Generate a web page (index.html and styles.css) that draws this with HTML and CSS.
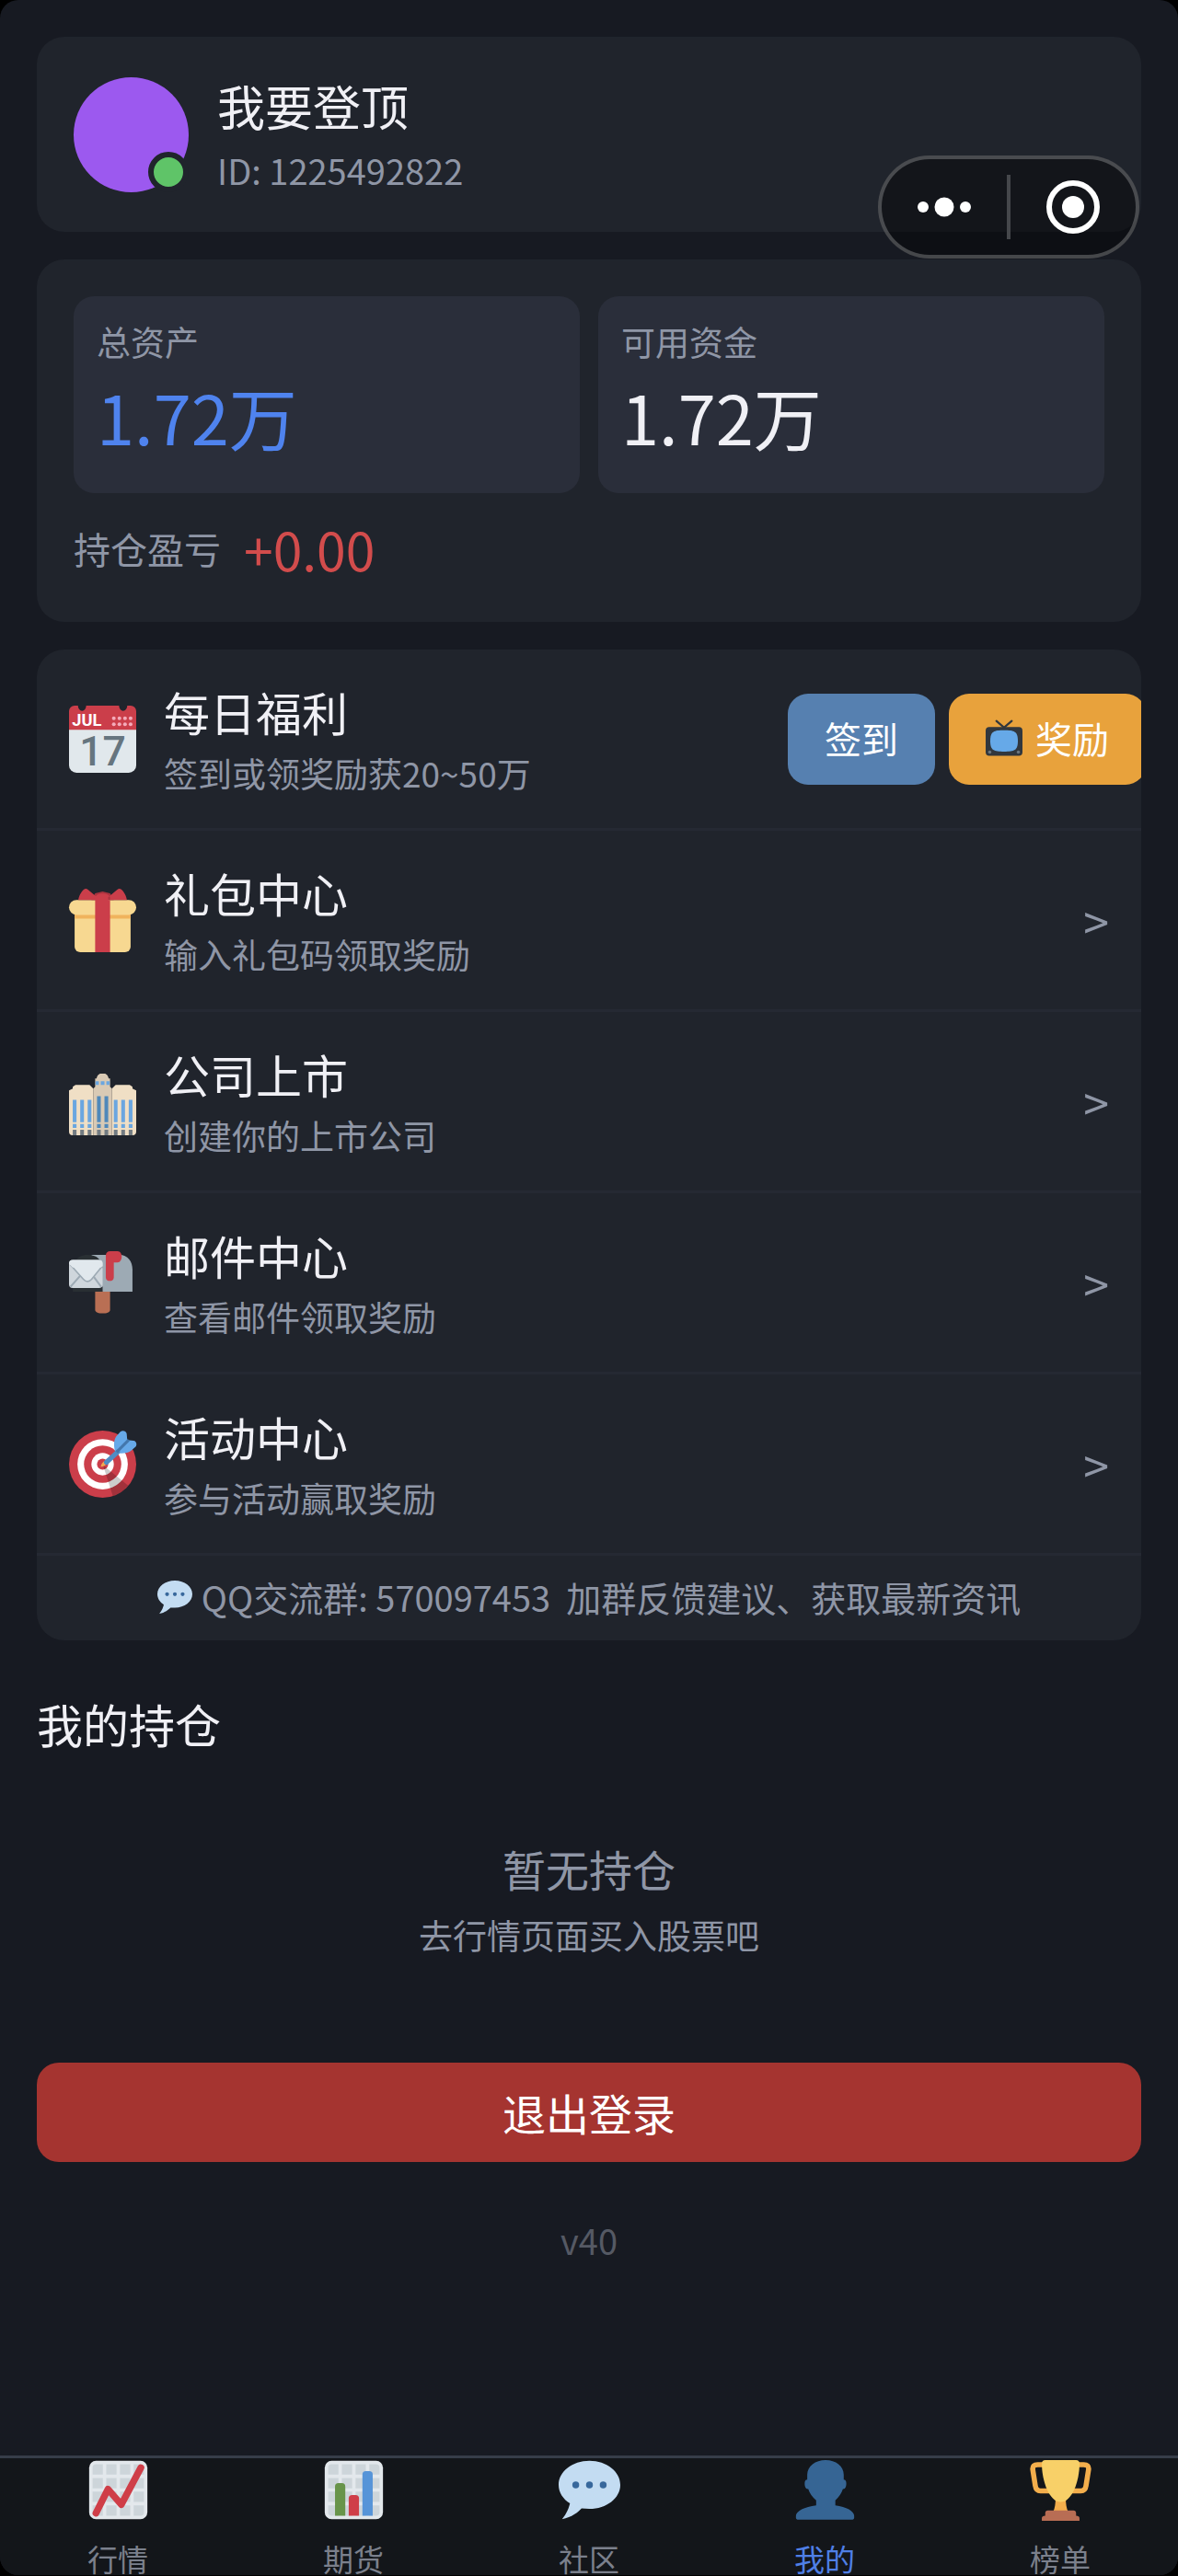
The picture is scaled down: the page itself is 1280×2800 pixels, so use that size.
FILE: index.html
```html
<!DOCTYPE html>
<html lang="zh-CN">
<head>
<meta charset="utf-8">
<meta name="viewport" content="width=device-width, initial-scale=1">
<title>我的</title>
<link rel="stylesheet" href="styles.css">
</head>
<body>
<div class="app">
  <div class="capsule">
    <button class="capsule-button" type="button" aria-label="更多">
      <svg width="60" height="60" viewBox="0 0 60 60" fill="#fff"><circle cx="7" cy="30" r="6"/><circle cx="30" cy="30" r="10.500"/><circle cx="53" cy="30" r="6"/></svg>
    </button>
    <span class="capsule-divider"></span>
    <button class="capsule-button" type="button" aria-label="关闭">
      <svg width="60" height="60" viewBox="0 0 60 60"><circle cx="30" cy="30" r="26" fill="none" stroke="#fff" stroke-width="6"/><circle cx="30" cy="30" r="12" fill="#fff"/></svg>
    </button>
  </div>

  <main class="content">
    <section class="card profile">
      <div class="avatar"><span class="status"></span></div>
      <div class="profile-text">
        <h1 class="name">我要登顶</h1>
        <p class="user-id">ID: 1225492822</p>
      </div>
    </section>

    <section class="card assets">
      <div class="tiles">
        <div class="tile">
          <p class="tile-label">总资产</p>
          <p class="tile-value total">1.72万</p>
        </div>
        <div class="tile">
          <p class="tile-label">可用资金</p>
          <p class="tile-value">1.72万</p>
        </div>
      </div>
      <div class="profit"><span class="profit-label">持仓盈亏</span><span class="profit-value">+0.00</span></div>
    </section>

    <section class="card menu">
      <div class="row">
        <svg class="row-icon" viewBox="0 0 36 36" aria-hidden="true">
          <path fill="#e1e8ec" d="M0 12h36v20a4 4 0 0 1-4 4H4a4 4 0 0 1-4-4z"/>
          <path fill="#cb3e4a" d="M0 13V3a3 3 0 0 1 3-3h1.800a2.200 2.800 0 0 0 4.400 0h17.600a2.200 2.800 0 0 0 4.400 0H33a3 3 0 0 1 3 3v10z"/>
          <text class="cal-month" x="9.500" y="11" text-anchor="middle">JUL</text>
          <g fill="#f4abba"><circle cx="24" cy="6.800" r="1"/><circle cx="27" cy="6.800" r="1"/><circle cx="30" cy="6.800" r="1"/><circle cx="33" cy="6.800" r="1"/><circle cx="24" cy="10" r="1"/><circle cx="27" cy="10" r="1"/><circle cx="30" cy="10" r="1"/><circle cx="33" cy="10" r="1"/></g>
          <text class="cal-day" x="18" y="32" text-anchor="middle">17</text>
        </svg>
        <div class="row-text">
          <h2 class="row-title">每日福利</h2>
          <p class="row-sub">签到或领奖励获20~50万</p>
        </div>
        <div class="row-actions">
          <button class="pill sign" type="button">签到</button>
          <button class="pill reward" type="button">
            <svg width="40" height="40" viewBox="0 0 36 36" aria-hidden="true">
              <path d="M10.500 1.500 18 8l7.500-6.500" fill="none" stroke="#31373d" stroke-width="2" stroke-linecap="round"/>
              <rect x="0" y="7.500" width="36" height="28" rx="3.500" fill="#31373d"/>
              <path d="M18 10.500c10 0 13.500 1 13.500 10.500S28 31.500 18 31.500 4.500 30.500 4.500 21 8 10.500 18 10.500z" fill="#66a9e8"/>
              <circle cx="4" cy="32" r="1.600" fill="#6b767f"/><circle cx="32" cy="32" r="1.600" fill="#6b767f"/>
            </svg>
            <span>奖励</span>
          </button>
        </div>
      </div>

      <a class="row" href="#gift">
        <svg class="row-icon" viewBox="0 0 36 36" aria-hidden="true">
          <path fill="#f7d891" d="M3 13h30v19a3 3 0 0 1-3 3H6a3 3 0 0 1-3-3z"/>
          <path fill="#f0b35c" d="M3 14.500h30V17H3z"/>
          <rect fill="#f7d891" y="7" width="36" height="8" rx="4"/>
          <path fill="#a9333f" d="M12 7l2-3.500 4-1 4 1L24 7z"/>
          <path fill="#cb3e4a" d="M5 7c.2-2 1.500-4.500 3-5.700.8-.5 1.500-.3 2.300.3L15 5.500V7zM31 7c-.2-2-1.500-4.500-3-5.700-.8-.5-1.500-.3-2.300.3L21 5.500V7zM14 35V5.500C15 3 21 3 22 5.500V35z"/>
        </svg>
        <div class="row-text">
          <h2 class="row-title">礼包中心</h2>
          <p class="row-sub">输入礼包码领取奖励</p>
        </div>
        <span class="chevron">&gt;</span>
      </a>

      <a class="row" href="#company">
        <svg class="row-icon" viewBox="0 0 36 36" aria-hidden="true">
          <path fill="#f0dfc5" d="M0 34V12l2-1V10l1.500-1H11l2 2v25H2a2 2 0 0 1-2-2zM36 34V12l-2-1V10l-1.500-1H25l-2 2v25h11a2 2 0 0 0 2-2z"/>
          <path fill="#d9cab5" d="M13 36V11l1-1V5.500h.8C15 4.200 16 3 17 3h2c1 0 2 1.200 2.200 2.500h.8V10l1 1v25z"/>
          <path fill="#6aa6e0" d="M14.200 7h1.800v2h-1.800zM17 7h2v2h-2zM20 7h1.800v2H20zM2 17h2v12H2zM6 17h2v12H6zM10 17h2v12h-2zM24 17h2v12h-2zM28 17h2v12h-2zM32 17h2v12h-2zM2 30h2v2H2zM6 30h2v2H6zM10 30h2v2h-2zM24 30h2v2h-2zM28 30h2v2h-2zM32 30h2v2h-2z"/>
          <path fill="#4f88ba" d="M15 15h2v14h-2zM19 15h2v14h-2zM15 30h2v2h-2zM19 30h2v2h-2z"/>
          <path fill="#727b82" d="M2 33h2v3H2zM6 33h2v3H6zM10 33h2v3h-2zM15 33h2v3h-2zM19 33h2v3h-2zM24 33h2v3h-2zM28 33h2v3h-2zM32 33h2v3h-2z"/>
        </svg>
        <div class="row-text">
          <h2 class="row-title">公司上市</h2>
          <p class="row-sub">创建你的上市公司</p>
        </div>
        <span class="chevron">&gt;</span>
      </a>

      <a class="row" href="#mail">
        <svg class="row-icon" viewBox="0 0 36 36" aria-hidden="true">
          <path fill="#b96f54" d="M14 21h8v11.500c0 2.400-8 2.400-8 0z"/>
          <path fill="#9daab4" d="M12 3h15c4.500 0 7 3.500 7 8v11.700H18z"/>
          <path fill="#292f33" d="M2 20h16v2.700H2zM3 7c1.500-3 4-4 7-4 5 0 7.500 2.500 8 7z"/>
          <rect fill="#cfd6dc" y="5.700" width="18" height="15" rx="2"/>
          <path d="M.8 20 7 13m10.200 7L12 13" stroke="#9daab4" stroke-width="1" fill="none"/>
          <path fill="#e1e8ed" stroke="#9daab4" stroke-width=".8" d="M.5 8l7.200 8c1.500 1.600 3 1.600 4.400 0L17.800 9"/>
          <path fill="#e1e8ed" d="M0 7.700a2 2 0 0 1 2-2h14a2 2 0 0 1 2 2V9l-1 .8H2L.2 8z"/>
          <path fill="#cb3e4a" d="M22 1h4c3 0 3 6 0 6h-2v8c0 2.600-4.300 2.600-4.300 0V3.200c0-1.300 1-2.200 2.300-2.200z"/>
        </svg>
        <div class="row-text">
          <h2 class="row-title">邮件中心</h2>
          <p class="row-sub">查看邮件领取奖励</p>
        </div>
        <span class="chevron">&gt;</span>
      </a>

      <a class="row" href="#events">
        <svg class="row-icon" viewBox="0 0 36 36" aria-hidden="true">
          <circle cx="18" cy="18" r="18" fill="#cb3e4a"/><circle cx="18" cy="18" r="13.500" fill="#fff"/><circle cx="18" cy="18" r="10" fill="#cb3e4a"/><circle cx="18" cy="18" r="6" fill="#fff"/><circle cx="18" cy="18" r="3" fill="#cb3e4a"/>
          <path fill="#000" opacity=".2" d="M18.200 18.500l13.500 11a18 18 0 0 1-8.200 5.600z"/>
          <path fill="#f3a850" d="M17 19.300c.2-1.200.8-2 1.600-2.800l1.500 1.500c-.8.800-1.700 1.300-3.100 1.300z"/>
          <path fill="#66a9e8" d="M25 12c-1-2.500-1.300-6.500.2-8.800L27.500.6c1-.9 3-.7 3.400 1l.3 3.500 3.500.3c1.400.3 1.900 2.200 1 3.200L33 11c-2.500 1.500-5.500 1.200-8 1z"/>
          <path stroke="#4f8cc4" stroke-width="2.600" fill="none" stroke-linecap="round" d="M20 17l6-5.500"/><path stroke="#4377ac" stroke-width="1.500" d="M25.500 11.500 32 5"/>
        </svg>
        <div class="row-text">
          <h2 class="row-title">活动中心</h2>
          <p class="row-sub">参与活动赢取奖励</p>
        </div>
        <span class="chevron">&gt;</span>
      </a>

      <p class="group-note">
        <svg width="38" height="38" viewBox="0 0 36 36" aria-hidden="true"><path fill="#c3dcf2" d="M18 1C8 1 0 7.300 0 15c0 4.400 2.600 8.300 6.600 10.800C6.100 28.100 4.900 31.600 2 35c5.800-1 9.400-4 11.400-6.200 1.500.2 3 .2 4.600.2 10 0 18-6.300 18-14S28 1 18 1z"/><g fill="#38689c"><circle cx="10" cy="15" r="2"/><circle cx="18" cy="15" r="2"/><circle cx="26" cy="15" r="2"/></g></svg>
        <span class="group-text">QQ交流群: 570097453&nbsp; 加群反馈建议、获取最新资讯</span>
      </p>
    </section>

    <h2 class="section-title">我的持仓</h2>
    <div class="empty">
      <p class="empty-title">暂无持仓</p>
      <p class="empty-sub">去行情页面买入股票吧</p>
    </div>
    <button class="logout" type="button">退出登录</button>
    <p class="version">v40</p>
  </main>

  <nav class="tabbar">
    <a class="tab" href="#market">
      <svg class="tab-icon" viewBox="0 0 36 36" aria-hidden="true"><rect x="1" y="1" width="34" height="34" rx="4" fill="#e3e8ec"/><path fill="#cdd5da" d="M5 3h4v6H3V5a2 2 0 0 1 2-2zM11 3h6v6h-6zM19 3h6v6h-6zM27 3h4a2 2 0 0 1 2 2v4h-6zM3 11h6v6H3zM11 11h6v6h-6zM19 11h6v6h-6zM27 11h6v6h-6zM3 19h6v6H3zM11 19h6v6h-6zM19 19h6v6h-6zM27 19h6v6h-6zM3 27h6v6H5a2 2 0 0 1-2-2zM11 27h6v6h-6zM19 27h6v6h-6zM27 27h6v4a2 2 0 0 1-2 2h-4z"/><path d="M5 31.500l7-14 7.800 9L31.200 5" fill="none" stroke="#cf3e48" stroke-width="4" stroke-linecap="round" stroke-linejoin="round"/></svg>
      <span>行情</span>
    </a>
    <a class="tab" href="#futures">
      <svg class="tab-icon" viewBox="0 0 36 36" aria-hidden="true"><rect x="1" y="1" width="34" height="34" rx="4" fill="#e3e8ec"/><path fill="#cdd5da" d="M5 3h4v6H3V5a2 2 0 0 1 2-2zM11 3h6v6h-6zM19 3h6v6h-6zM27 3h4a2 2 0 0 1 2 2v4h-6zM3 11h6v6H3zM11 11h6v6h-6zM19 11h6v6h-6zM27 11h6v6h-6zM3 19h6v6H3zM11 19h6v6h-6zM19 19h6v6h-6zM27 19h6v6h-6zM3 27h6v6H5a2 2 0 0 1-2-2zM11 27h6v6h-6zM19 27h6v6h-6zM27 27h6v4a2 2 0 0 1-2 2h-4z"/><path fill="#68944a" d="M7 33V16a2 2 0 0 1 2-2h2a2 2 0 0 1 2 2v17z"/><path fill="#cf3e48" d="M15 33V23a2 2 0 0 1 2-2h2a2 2 0 0 1 2 2v10z"/><path fill="#5694d8" d="M23 33V9a2 2 0 0 1 2-2h2a2 2 0 0 1 2 2v24z"/></svg>
      <span>期货</span>
    </a>
    <a class="tab" href="#community">
      <svg class="tab-icon" viewBox="0 0 36 36" aria-hidden="true"><path fill="#c3dcf2" d="M18 1C8 1 0 7.300 0 15c0 4.400 2.600 8.300 6.600 10.800C6.100 28.100 4.900 31.600 2 35c5.800-1 9.400-4 11.400-6.200 1.500.2 3 .2 4.600.2 10 0 18-6.300 18-14S28 1 18 1z"/><g fill="#38689c"><circle cx="10" cy="15" r="2"/><circle cx="18" cy="15" r="2"/><circle cx="26" cy="15" r="2"/></g></svg>
      <span>社区</span>
    </a>
    <a class="tab active" href="#mine" aria-current="page">
      <svg class="tab-icon" viewBox="0 0 36 36" aria-hidden="true"><path fill="#366594" d="M24 27v-3c2-1.700 3.700-4.200 4.400-6.500 1.600.1 2-1.800 2-3.200 0-1.300-.4-2.300-1.500-2.300V9C28.900 4 24.300.5 18.300.5S7.700 4 7.600 9v3c-1.100 0-1.500 1-1.500 2.300 0 1.400.4 3.300 2.100 3.200.7 2.300 2.400 4.800 4.600 6.500v3C6 27.700 1 30.500 1 33v1.300c0 .6.400 1 1 1h32c.6 0 1-.4 1-1V33c0-2.500-4.500-5.300-11-6z"/></svg>
      <span>我的</span>
    </a>
    <a class="tab" href="#ranking">
      <svg class="tab-icon" viewBox="0 0 36 36" aria-hidden="true"><path d="M9 3.200H4.500C2.500 3.200 1.500 4 1.700 6l1.500 9.500c.3 2 1.200 3 3 3H12m15-15.300h4.500c2 0 3 .8 2.800 2.800l-1.500 9.500c-.3 2-1.200 3-3 3H24" fill="none" stroke="#f3ae4c" stroke-width="3"/><path fill="#f3ae4c" d="M15 23h6c0 3 .3 5.500 1.500 8h-9c1.200-2.500 1.500-5 1.500-8z"/><path fill="#f8d068" d="M9 .5h18c1.300 0 2 .8 2 2C29 13 24.500 25 18 25S7 13 7 2.500c0-1.200.7-2 2-2z"/><path fill="#b86d54" d="M7 36v-1.500c0-1 .7-1.500 2-1.500v-1.500c0-.9.600-1.500 1.500-1.500h15c.9 0 1.500.6 1.500 1.500V33c1.300 0 2 .5 2 1.500V36z"/></svg>
      <span>榜单</span>
    </a>
  </nav>
</div>
</body>
</html>
```
FILE: styles.css
```css
* {
  box-sizing: border-box;
}

body {
  margin: 0;
  padding-bottom: 1px;
  min-height: 100vh;
  display: flex;
  background: #000;
  color: #f0f0f5;
  font-family: "Noto Sans CJK SC", "Noto Sans", sans-serif;
}

h1,
h2,
p {
  margin: 0;
  font-weight: 400;
}

a {
  color: inherit;
  text-decoration: none;
}

button {
  border: 0;
  padding: 0;
  font: inherit;
  color: #fff;
  cursor: pointer;
}

svg {
  display: block;
  flex: none;
}

.app {
  position: relative;
  flex: 1;
  min-width: 0;
  display: flex;
  flex-direction: column;
  background: #171a22;
  border-radius: 20px;
}

.content {
  padding: 40px 40px 60px;
}

.card {
  background: #20242c;
  border-radius: 30px;
  margin-bottom: 30px;
}

/* Floating mini-program capsule */
.capsule {
  position: absolute;
  top: 169px;
  right: 42px;
  width: 284px;
  height: 112px;
  display: flex;
  align-items: center;
  background: rgba(0, 0, 0, 0.4);
  border: 4px solid rgba(255, 255, 255, 0.23);
  border-radius: 56px;
}

.capsule-button {
  flex: 1;
  display: flex;
  justify-content: center;
  background: none;
}

.capsule-divider {
  width: 4px;
  height: 70px;
  background: #45474b;
}

/* Profile */
.profile {
  display: flex;
  align-items: center;
  gap: 31px;
  padding: 42px 40px;
}

.avatar {
  position: relative;
  width: 125px;
  height: 125px;
  border-radius: 50%;
  background: #9c59ef;
}

.status {
  position: absolute;
  right: 0;
  bottom: 0;
  width: 44px;
  height: 44px;
  border: 6px solid #20242c;
  border-radius: 50%;
  background: #5fc468;
}

.name {
  font-size: 52px;
  line-height: 66px;
}

.user-id {
  margin-top: 12px;
  font-size: 38px;
  line-height: 50px;
  color: #8f96a6;
}

/* Assets */
.assets {
  padding: 40px 40px 45px;
}

.tiles {
  display: grid;
  grid-template-columns: 1fr 1fr;
  gap: 20px;
}

.tile {
  padding: 24px 25px 28px;
  background: #2a2e3a;
  border-radius: 22px;
}

.tile-label {
  font-size: 37px;
  line-height: 50px;
  color: #8f96a6;
}

.tile-value {
  font-size: 74px;
  line-height: 112px;
}

.total {
  color: #4f83ee;
}

.profit {
  display: flex;
  align-items: center;
  gap: 25px;
  margin-top: 25px;
  line-height: 70px;
}

.profit-label {
  font-size: 40px;
  color: #8f96a6;
}

.profit-value {
  font-size: 57px;
  color: #d24c4c;
}

/* Menu */
.menu {
  overflow: hidden;
}

.row {
  display: flex;
  align-items: center;
  gap: 30px;
  padding: 36px 35px;
  border-bottom: 3px solid #252933;
}

.row-icon {
  width: 73px;
  height: 73px;
  overflow: visible;
}

.cal-month {
  font: 700 9px Roboto, sans-serif;
  fill: #fff;
}

.cal-day {
  font: 500 22px Roboto, sans-serif;
  fill: #66757f;
}

.row-text {
  flex: 1;
}

.row-title {
  font-size: 50px;
  line-height: 62px;
}

.row-sub {
  margin-top: 12px;
  font-size: 37px;
  line-height: 48px;
  color: #8f96a6;
}

.row-actions {
  display: flex;
  gap: 15px;
  margin-right: -40px;
}

.pill {
  display: flex;
  align-items: center;
  gap: 14px;
  height: 99px;
  padding: 0 40px 2px;
  border-radius: 22px;
  font-size: 40px;
  white-space: nowrap;
}

.sign {
  background: #5680b0;
}

.reward {
  background: #e8a23c;
}

.chevron {
  font-size: 50px;
  line-height: 64px;
  color: #8f96a6;
}

.group-note {
  display: flex;
  align-items: center;
  justify-content: center;
  gap: 10px;
  padding: 20px 35px 22px;
  font-size: 38px;
  line-height: 50px;
  color: #8f96a6;
}

/* Holdings */
.section-title {
  margin-top: 60px;
  font-size: 50px;
  line-height: 60px;
}

.empty {
  padding: 98px 0 114px;
  text-align: center;
  color: #8f96a6;
}

.empty-title {
  font-size: 47px;
  line-height: 60px;
}

.empty-sub {
  margin-top: 17px;
  font-size: 37px;
  line-height: 50px;
}

.logout {
  display: block;
  width: 100%;
  height: 108px;
  padding-bottom: 2px;
  border-radius: 24px;
  background: #a53430;
  font-size: 47px;
}

.version {
  margin-top: 60px;
  text-align: center;
  font-size: 38px;
  line-height: 50px;
  color: #555964;
}

/* Bottom tabs */
.tabbar {
  display: grid;
  grid-template-columns: repeat(5, 1fr);
  margin-top: auto;
  border-top: 3px solid #363d49;
  border-radius: 0 0 20px 20px;
  background: #13161a;
}

.tab {
  display: flex;
  flex-direction: column;
  align-items: center;
  gap: 25px;
  padding: 1px 0 2px;
  font-size: 33px;
  line-height: 32px;
  color: #7b808c;
}

.tab-icon {
  width: 67px;
  height: 67px;
}

.active {
  color: #4f7fe6;
}
```
